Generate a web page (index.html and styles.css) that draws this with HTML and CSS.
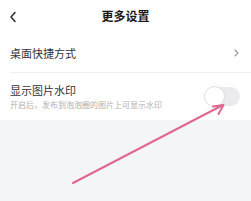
FILE: index.html
```html
<!DOCTYPE html>
<html lang="zh">
<head>
<meta charset="utf-8">
<link rel="stylesheet" href="styles.css">
</head>
<body>
<div class="page">
  <div class="card">
    <div class="header">
      <svg class="back" width="8" height="12" viewBox="0 0 8 12"><path d="M6 1.5 L2 6 L6 10.5" fill="none" stroke="#333" stroke-width="1.6" stroke-linecap="round" stroke-linejoin="round"/></svg>
      <div class="title">更多设置</div>
    </div>
    <div class="row row-link">
      <span class="label">桌面快捷方式</span>
      <svg class="chev" width="5" height="8" viewBox="0 0 5 8"><path d="M1 1 L4 4 L1 7" fill="none" stroke="#999" stroke-width="1.1" stroke-linecap="round" stroke-linejoin="round"/></svg>
    </div>
    <div class="sep"></div>
    <div class="row row-toggle">
      <div class="texts">
        <div class="label">显示图片水印</div>
        <div class="sub">开启后，发布到泡泡圈的图片上可显示水印</div>
      </div>
      <div class="switch"><div class="knob"></div></div>
    </div>
  </div>
  <svg class="arrow" width="251" height="201" viewBox="0 0 251 201">
    <path d="M73 183 L223 105" stroke="#e2678f" stroke-width="2" fill="none" stroke-linecap="round"/>
    <path d="M213 106.5 L223.5 105 L218.5 114" stroke="#e2678f" stroke-width="2" fill="none" stroke-linecap="round" stroke-linejoin="round"/>
  </svg>
</div>
</body>
</html>
```
FILE: styles.css
```css
html, body {
  margin: 0;
  padding: 0;
}
body {
  background: #f3f5f9;
  font-family: "Noto Sans CJK SC", "Noto Sans", sans-serif;
  width: 251px;
  height: 201px;
  overflow: hidden;
}
.page {
  position: relative;
  width: 251px;
  height: 201px;
}
.card {
  background: #fff;
}
.header {
  height: 34px;
  display: flex;
  align-items: center;
  justify-content: center;
  position: relative;
}
.back {
  position: absolute;
  left: 9px;
  top: 11px;
}
.title {
  font-size: 12px;
  font-weight: 700;
  color: #1a1a1a;
  line-height: 16px;
  margin-top: -2px;
}
.row {
  display: flex;
  align-items: center;
  justify-content: space-between;
  padding: 0 11px 0 10px;
}
.row-link {
  height: 38px;
}
.label {
  font-size: 11px;
  line-height: 14px;
  color: #333;
}
.chev {
  margin-right: 1px;
}
.sep {
  height: 1px;
  background: #eeeff2;
  margin-left: 10px;
}
.row-toggle {
  height: 47px;
}
.texts {
  display: flex;
  flex-direction: column;
  gap: 2px;
}
.sub {
  font-size: 8px;
  line-height: 11px;
  color: #b0b0b0;
}
.switch {
  width: 35px;
  height: 19px;
  border-radius: 10px;
  background: #ebebed;
  position: relative;
}
.knob {
  position: absolute;
  left: -1px;
  top: -1px;
  width: 21px;
  height: 21px;
  border-radius: 50%;
  background: #fff;
  border: 1px solid #dcdcdc;
  box-sizing: border-box;
}
.arrow {
  position: absolute;
  left: 0;
  top: 0;
  pointer-events: none;
}
```
